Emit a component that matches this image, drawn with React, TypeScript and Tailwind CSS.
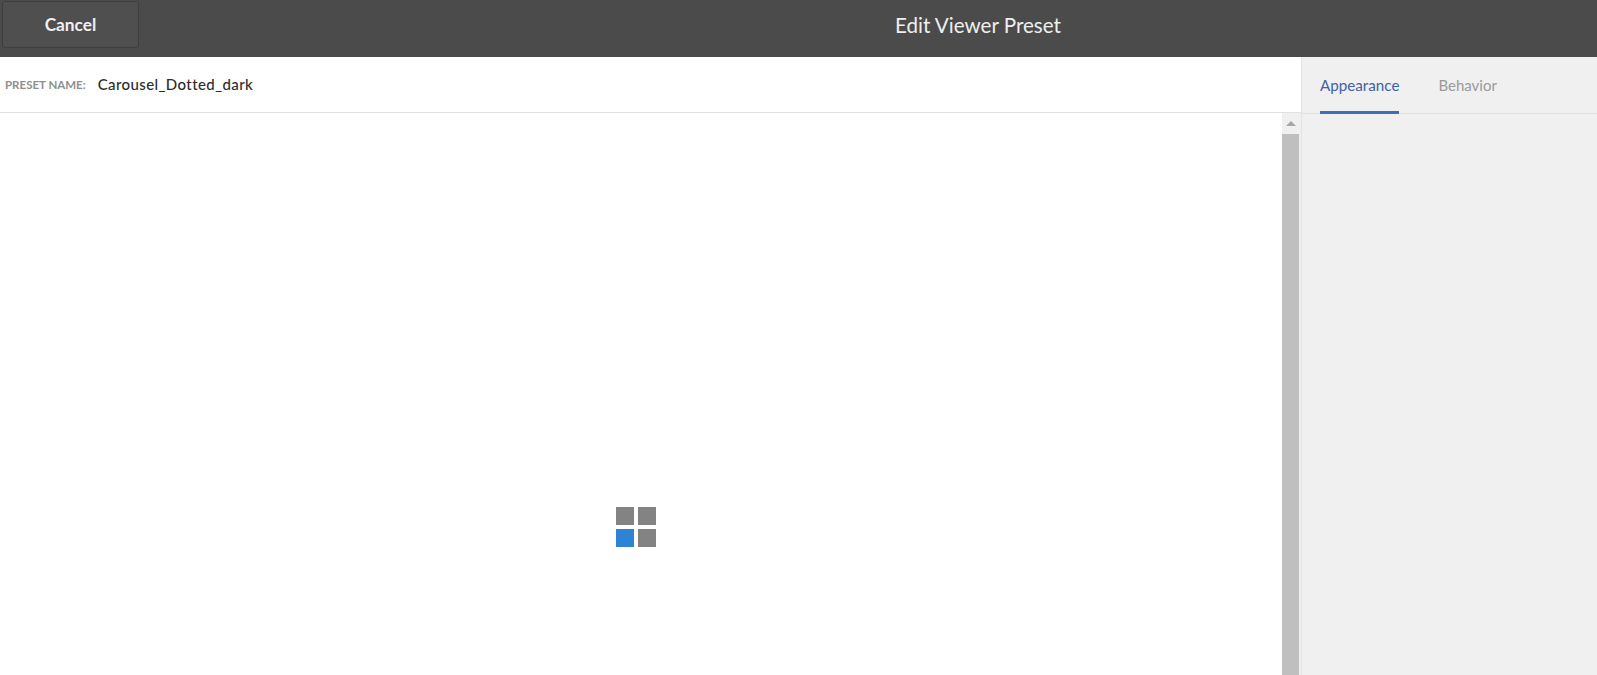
export default function App() {
  return (
    <div className="flex h-[675px] w-[1597px] flex-col overflow-hidden bg-white font-['Lato','Noto_Sans',sans-serif]">
      <header className="flex h-[57px] shrink-0 items-start bg-[#4b4b4b]">
        <button className="ml-[2px] mt-[1px] h-[47px] w-[137px] shrink-0 rounded-[3px] border border-[#3e3e3e] bg-[#4f4f4f] text-[17.3px] font-bold text-[#f0f0f0]">
          Cancel
        </button>
        <h1 className="ml-[756px] mt-[12px] text-[20.6px] leading-[27px] font-normal text-[#efefef]">Edit Viewer Preset</h1>
      </header>
      <div className="flex min-h-0 flex-1">
        <main className="flex min-w-0 flex-1 flex-col">
          <div className="flex h-[56px] shrink-0 items-center border-b border-[#e1e1e1] pl-[5px]">
            <span className="text-[11.5px] font-bold text-[#8f8f8f]">PRESET NAME:</span>
            <span className="ml-[12px] text-[15px] font-medium tracking-[0.4px] text-[#2c2c2c]">Carousel_Dotted_dark</span>
          </div>
          <div className="flex min-h-0 flex-1">
            <div className="flex-1 pl-[616px] pt-[394px]">
              <div className="grid w-[40px] grid-cols-2 gap-[4px]">
                <div className="h-[18px] w-[18px] bg-[#838383]" />
                <div className="h-[18px] w-[18px] bg-[#838383]" />
                <div className="h-[18px] w-[18px] bg-[#2f83d4]" />
                <div className="h-[18px] w-[18px] bg-[#838383]" />
              </div>
            </div>
            <div className="flex w-[19px] shrink-0 flex-col items-start bg-[#f0f0f0]">
              <div className="flex h-[21px] w-[17px] items-center justify-center">
                <div className="h-0 w-0 border-x-[5px] border-b-[5px] border-x-transparent border-b-[#a6a6a6]" />
              </div>
              <div className="w-[17px] flex-1 bg-[#bfbfbf]" />
            </div>
          </div>
        </main>
        <aside className="w-[296px] shrink-0 border-l border-[#e4e4e4] bg-[#f0f0f0]">
          <div className="flex h-[57px] gap-[39px] border-b border-[#dfdfdf] pl-[18px]">
            <div className="h-[57px] border-b-[3px] border-[#3f6fb8] pt-[18px] text-[15.2px] leading-[20px] text-[#3f62a8]">
              Appearance
            </div>
            <div className="pt-[18px] text-[15px] leading-[20px] text-[#9a9a9a]">Behavior</div>
          </div>
        </aside>
      </div>
    </div>
  );
}
